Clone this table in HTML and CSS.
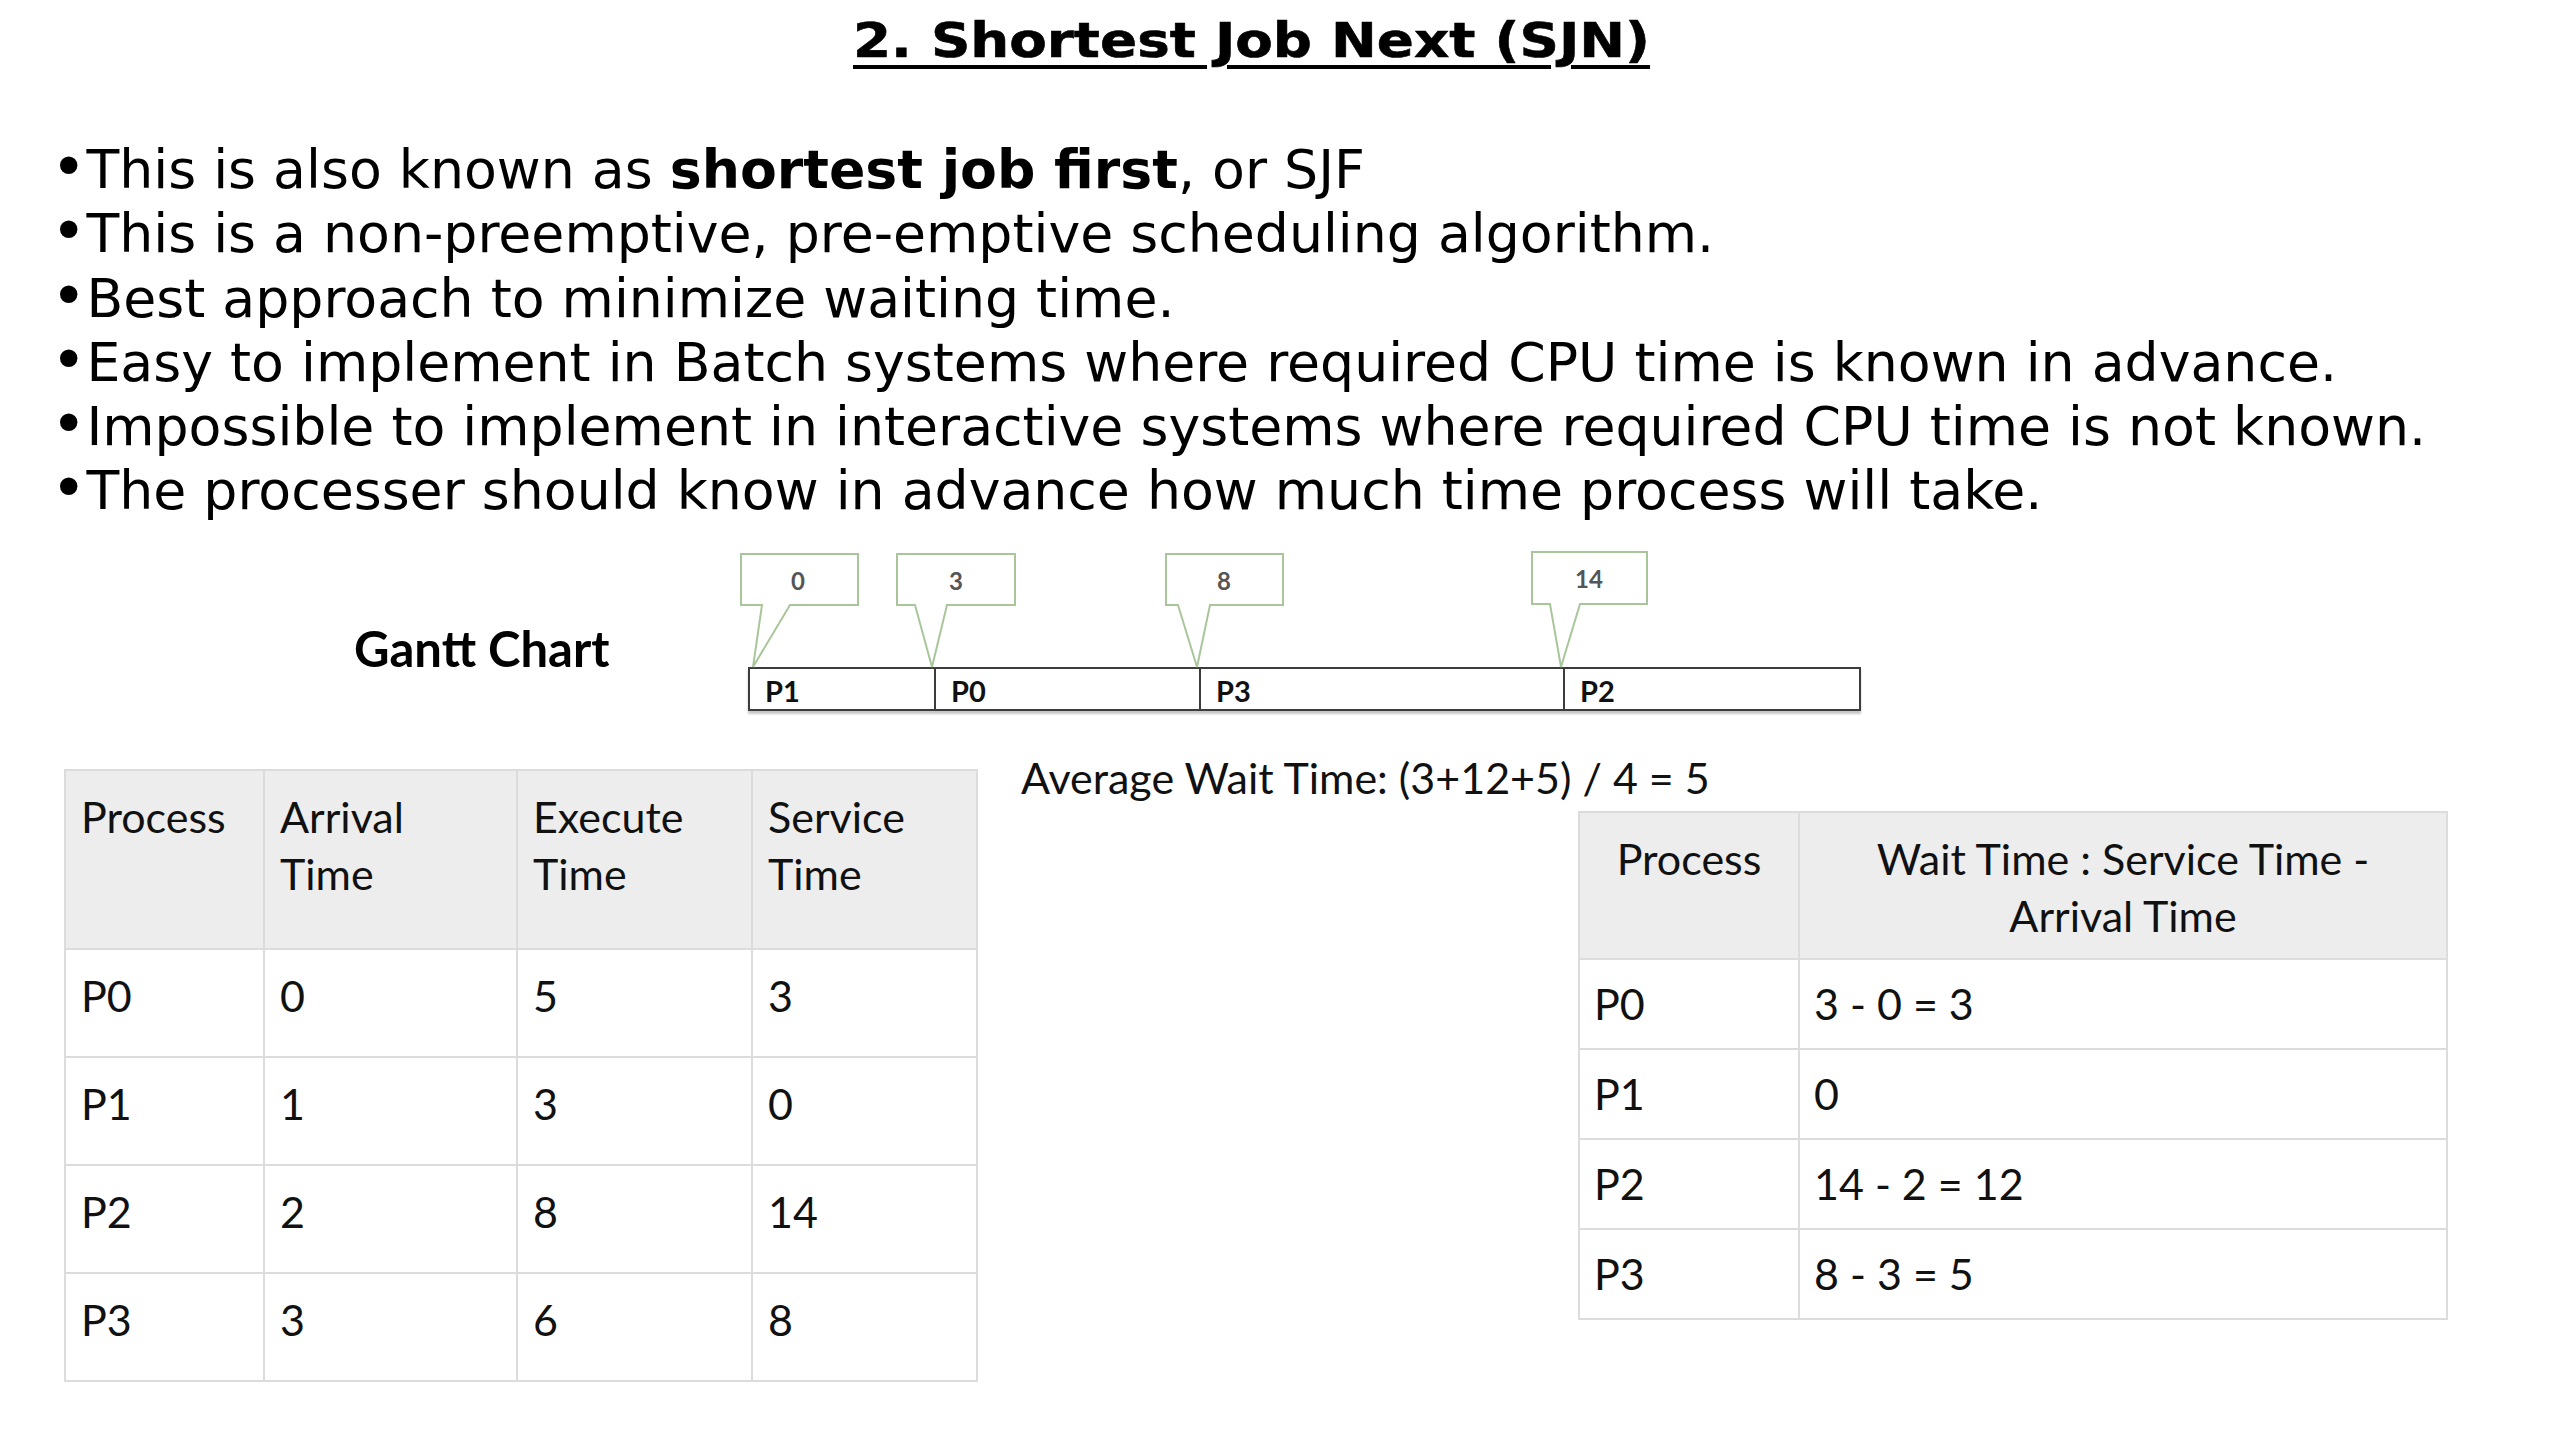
FILE: index.html
```html
<!DOCTYPE html>
<html lang="en">
<head>
<meta charset="utf-8">
<title>Shortest Job Next (SJN)</title>
<link rel="stylesheet" href="styles.css">
</head>
<body>
<main class="slide">
  <h1 class="title"><span class="title-text">2. Shortest Job Next (SJN)</span></h1>

  <ul class="points">
    <li><span class="dot">•</span>This is also known as <b>shortest job first</b>, or SJF</li>
    <li><span class="dot">•</span>This is a non-preemptive, pre-emptive scheduling algorithm.</li>
    <li><span class="dot">•</span>Best approach to minimize waiting time.</li>
    <li><span class="dot">•</span>Easy to implement in Batch systems where required CPU time is known in advance.</li>
    <li><span class="dot">•</span>Impossible to implement in interactive systems where required CPU time is not known.</li>
    <li><span class="dot">•</span>The processer should know in advance how much time process will take.</li>
  </ul>

  <section class="gantt">
    <div class="gantt-label">Gantt Chart</div>
    <div class="gantt-chart">
      <svg class="callouts" width="1121" height="120" viewBox="0 0 1121 120">
        <path d="M1 3H118V54H50L13 116L22 54H1Z"/>
        <path d="M157 3H275V54H207L192 116L175 54H157Z"/>
        <path d="M426 3H543V54H470L457 116L438 54H426Z"/>
        <path d="M792 1H907V53H840L821 116L810 53H792Z"/>
        <text x="58" y="29">0</text>
        <text x="216" y="29">3</text>
        <text x="484" y="29">8</text>
        <text x="849" y="27">14</text>
      </svg>
      <div class="bar">
        <div class="seg" style="width:184px">P1</div>
        <div class="seg" style="width:265px">P0</div>
        <div class="seg" style="width:364px">P3</div>
        <div class="seg seg-last">P2</div>
      </div>
    </div>
  </section>

  <section class="tables">
    <table class="proc">
      <colgroup>
        <col class="pc1"><col class="pc2"><col class="pc3"><col class="pc4">
      </colgroup>
      <thead>
        <tr><th>Process</th><th>Arrival<br>Time</th><th>Execute<br>Time</th><th>Service<br>Time</th></tr>
      </thead>
      <tbody>
        <tr><td>P0</td><td>0</td><td>5</td><td>3</td></tr>
        <tr><td>P1</td><td>1</td><td>3</td><td>0</td></tr>
        <tr><td>P2</td><td>2</td><td>8</td><td>14</td></tr>
        <tr><td>P3</td><td>3</td><td>6</td><td>8</td></tr>
      </tbody>
    </table>

    <div class="right">
      <p class="avg">Average Wait Time: (3+12+5) / 4 = 5</p>
      <table class="wait">
        <colgroup><col class="wc1"><col class="wc2"></colgroup>
        <thead>
          <tr><th>Process</th><th>Wait Time : Service Time -<br>Arrival Time</th></tr>
        </thead>
        <tbody>
          <tr><td>P0</td><td>3 - 0 = 3</td></tr>
          <tr><td>P1</td><td>0</td></tr>
          <tr><td>P2</td><td>14 - 2 = 12</td></tr>
          <tr><td>P3</td><td>8 - 3 = 5</td></tr>
        </tbody>
      </table>
    </div>
  </section>
</main>
</body>
</html>
```

FILE: styles.css
```css
html, body {
  margin: 0;
  padding: 0;
  background: #ffffff;
}

.slide {
  width: 2560px;
  height: 1440px;
  overflow: hidden;
  color: #000;
  background: #fff;
}

/* Title */
.title {
  margin: 0;
  padding: 9px 0 0 853px;
  font: bold 48px/62px "DejaVu Sans", Verdana, sans-serif;
  color: #000;
}

.title-text {
  display: inline-block;
  transform: scaleX(1.14);
  transform-origin: left center;
  text-decoration: underline;
  text-decoration-thickness: 4px;
  text-underline-offset: 8px;
  -webkit-text-stroke: 0.6px #000;
}

/* Bullet points */
.points {
  list-style: none;
  margin: 67px 0 0;
  padding: 0 0 0 51px;
  font: 53.7px/64.3px "DejaVu Sans", Verdana, sans-serif;
  color: #000;
}

.points li {
  white-space: nowrap;
}

.dot {
  font-size: 60px;
  line-height: 0;
}

.points b {
  font-weight: bold;
}

/* Gantt chart */
.gantt {
  display: flex;
  align-items: flex-start;
  margin-top: 27px;
  padding-left: 354px;
}

.gantt-label {
  width: 386px;
  margin-top: 67px;
  font: bold 49px/60px Lato, "Open Sans", sans-serif;
  color: #000;
}

.gantt-chart {
  position: relative;
  width: 1121px;
  height: 160px;
}

.callouts {
  position: absolute;
  left: 0;
  top: 0;
}

.callouts path {
  fill: #ffffff;
  stroke: #a9c69b;
  stroke-width: 2;
}

.callouts text {
  font-family: Lato, "Open Sans", sans-serif;
  font-size: 24px;
  font-weight: bold;
  fill: #555555;
  text-anchor: middle;
  dominant-baseline: central;
}

.bar {
  display: flex;
  margin: 116px 0 0 8px;
  width: 1113px;
  height: 44px;
  box-sizing: border-box;
  border: 2px solid #3c3c3c;
  box-shadow: 0 3px 2px rgba(0, 0, 0, 0.22);
  background: #fff;
}

.seg {
  box-sizing: border-box;
  padding: 4px 0 0 15px;
  font: bold 29px/36px Lato, "Open Sans", sans-serif;
  color: #111;
  border-left: 2px solid #3c3c3c;
}

.seg:first-child {
  border-left: none;
}

.seg-last {
  flex: 1;
}

/* Tables */
.tables {
  display: flex;
  align-items: flex-start;
  margin-top: 38px;
  padding-left: 64px;
  gap: 43px;
}

.proc,
.wait {
  border-collapse: collapse;
  table-layout: fixed;
  font: 43px/57px Lato, "Open Sans", sans-serif;
  color: #111;
}

.proc {
  width: 912px;
  margin-top: 20px;
}

.pc1 { width: 199px; }
.pc2 { width: 253px; }
.pc3 { width: 235px; }
.pc4 { width: 225px; }

.proc th,
.proc td {
  border: 2px solid #dcdcdc;
  padding: 17px 10px 0 15px;
  text-align: left;
  vertical-align: top;
  font-weight: normal;
}

.proc thead tr { height: 179px; }
.proc tbody tr { height: 108px; }

.proc th,
.wait th {
  background: #ededed;
}

.right {
  display: flex;
  flex-direction: column;
}

.avg {
  margin: 0;
  font: 43px/57px Lato, "Open Sans", sans-serif;
  color: #111;
  white-space: nowrap;
}

.wait {
  width: 868px;
  margin: 5px 0 0 557px;
}

.wc1 { width: 220px; }
.wc2 { width: 648px; }

.wait th,
.wait td {
  border: 2px solid #dcdcdc;
  font-weight: normal;
  vertical-align: middle;
}

.wait th {
  text-align: center;
  vertical-align: top;
  padding: 17px 8px 0;
}

.wait td {
  text-align: left;
  padding: 0 10px 0 14px;
}

.wait thead tr { height: 147px; }
.wait tbody tr { height: 90px; }
```
